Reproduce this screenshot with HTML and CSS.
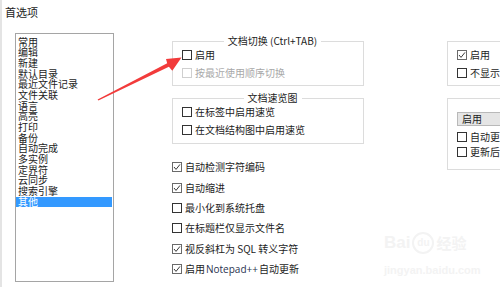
FILE: index.html
```html
<!DOCTYPE html>
<html lang="zh-CN">
<head>
    <meta charset="UTF-8">
    <title>首选项</title>
    <link rel="stylesheet" href="styles.css">
</head>
<body>
    <div class="title">首选项</div>

    <div class="main">
        <!-- category list -->
        <div class="list">
            <div class="item">常用</div>
            <div class="item">编辑</div>
            <div class="item">新建</div>
            <div class="item">默认目录</div>
            <div class="item">最近文件记录</div>
            <div class="item">文件关联</div>
            <div class="item">语言</div>
            <div class="item">高亮</div>
            <div class="item">打印</div>
            <div class="item">备份</div>
            <div class="item">自动完成</div>
            <div class="item">多实例</div>
            <div class="item">定界符</div>
            <div class="item">云同步</div>
            <div class="item">搜索引擎</div>
            <div class="item selected">其他</div>
        </div>

        <!-- middle column -->
        <div class="column middle">
            <fieldset class="group first">
                <legend>文档切换 (Ctrl+TAB)</legend>
                <div class="row"><span class="box"></span>启用</div>
                <div class="row disabled"><span class="box"></span>按最近使用顺序切换</div>
            </fieldset>
            <fieldset class="group second">
                <legend>文档速览图</legend>
                <div class="row"><span class="box"></span>在标签中启用速览</div>
                <div class="row"><span class="box"></span>在文档结构图中启用速览</div>
            </fieldset>

            <div class="checks">
                <div class="row"><span class="box checked"><svg viewBox="0 0 8 8"><polyline points="1,4 3,6.4 7,1.4"/></svg></span>自动检测字符编码</div>
                <div class="row"><span class="box checked"><svg viewBox="0 0 8 8"><polyline points="1,4 3,6.4 7,1.4"/></svg></span>自动缩进</div>
                <div class="row"><span class="box"></span>最小化到系统托盘</div>
                <div class="row"><span class="box"></span>在标题栏仅显示文件名</div>
                <div class="row"><span class="box checked"><svg viewBox="0 0 8 8"><polyline points="1,4 3,6.4 7,1.4"/></svg></span>视反斜杠为 SQL 转义字符</div>
                <div class="row"><span class="box checked"><svg viewBox="0 0 8 8"><polyline points="1,4 3,6.4 7,1.4"/></svg></span>启用 <span class="latin">Notepad++</span> 自动更新</div>
            </div>
        </div>

        <!-- right column (cut off by the window) -->
        <div class="column right">
            <fieldset class="group doclist">
                <div class="row"><span class="box checked"><svg viewBox="0 0 8 8"><polyline points="1,4 3,6.4 7,1.4"/></svg></span>启用</div>
                <div class="row"><span class="box"></span>不显示扩展名列</div>
            </fieldset>
            <fieldset class="group autodetect">
                <div class="combo">启用</div>
                <div class="row small"><span class="box"></span>自动更新</div>
                <div class="row small"><span class="box"></span>更新后滚动到最后一行</div>
            </fieldset>
        </div>
    </div>

    <!-- red arrow drawn over the dialog -->
    <svg class="arrow" width="500" height="287" viewBox="0 0 500 287">
        <polygon points="97.6,99.4 167.2,63.3 166,59 181.5,57.6 172.3,70.8 168.9,66.8 98.4,100.6"/>
    </svg>

    <!-- faint watermark -->
    <div class="watermark">
        <div class="mark-top"><span>Bai</span><span class="paw">du</span><span>经验</span></div>
        <div class="mark-url">jingyan.baidu.com</div>
    </div>
</body>
</html>
```

FILE: styles.css
```css
body {
    margin: 0;
    width: 500px;
    height: 287px;
    box-sizing: border-box;
    overflow: hidden;
    position: relative;
    background: #fff;
    border-left: 2px solid #e4e4e4;
    color: #1c1c1c;
    font-family: "Noto Sans CJK SC", "Noto Sans", sans-serif;
    font-size: 10px;
    line-height: 12px;
}

.title {
    height: 33px;
    padding-left: 3px;
    font-size: 11px;
    line-height: 24px;
}

.main {
    display: flex;
    padding-left: 13px;
}

.list {
    flex: none;
    width: 99px;
    height: 249px;
    box-sizing: border-box;
    border: 1px solid #a5a5a5;
    padding-top: 2.7px;
}
.item {
    padding-left: 2px;
    line-height: 10.67px;
    height: 10.67px;
    white-space: nowrap;
}
.item.selected {
    margin-right: 1px;
    background: #3399ff;
    color: #fff;
}

.column {
    flex: none;
    width: 192px;
}
.middle {
    margin-left: 58px;
}
.right {
    margin-left: 83px;
    width: 200px;
}

.group {
    margin: 0;
    min-width: 0;
    border: 1px solid #dcdcdc;
    padding: 0 0 3px 9px;
}
.group legend {
    margin-left: auto;
    margin-right: auto;
    padding: 0 4px;
    line-height: 10px;
    font-size: 10px;
}
.group.first {
    margin-top: 3px;
}
.group.second {
    margin-top: 7px;
    padding-bottom: 4px;
}
.group.doclist {
    margin-top: 8px;
    padding-top: 4px;
}
.group.autodetect {
    margin-top: 12px;
    padding-top: 13px;
    padding-bottom: 10px;
}

.row {
    display: flex;
    align-items: center;
    height: 18px;
    white-space: nowrap;
}
.row.small {
    height: 15px;
}
.row.disabled {
    color: #a8a8a8;
}

.box {
    flex: none;
    width: 10px;
    height: 10px;
    box-sizing: border-box;
    border: 1px solid #333;
    background: #fff;
    margin-right: 3px;
    display: flex;
}
.box.checked {
    border-color: #6a6a6a;
}
.box svg {
    width: 8px;
    height: 8px;
    fill: none;
    stroke: #3a3a3a;
    stroke-width: 1;
}
.row.disabled .box {
    border-color: #cfcfcf;
}

.checks {
    margin-top: 13px;
}
.checks .row {
    height: 20.4px;
}
.latin {
    font-family: "Open Sans", "Liberation Sans", sans-serif;
    color: #2a3350;
    margin: 0 1px;
}

.combo {
    height: 14px;
    box-sizing: border-box;
    border: 1px solid #b9b9b9;
    background: #e5e5e5;
    padding-left: 4px;
    line-height: 12px;
    margin-bottom: 3px;
    white-space: nowrap;
}

.arrow {
    position: absolute;
    left: -2px;
    top: 0;
    pointer-events: none;
}
.arrow polygon {
    fill: #f23b3b;
}

.watermark {
    position: absolute;
    left: 382px;
    top: 232px;
    color: #f3f3f3;
    font-family: "Liberation Sans", sans-serif;
    pointer-events: none;
}
.mark-top {
    display: flex;
    align-items: center;
    font-size: 17px;
    font-weight: bold;
    line-height: 22px;
}
.mark-top .paw {
    width: 22px;
    height: 22px;
    border: 2px solid #f3f3f3;
    border-radius: 50%;
    box-sizing: border-box;
    font-size: 10px;
    line-height: 18px;
    text-align: center;
    margin: 0 2px;
}
.mark-top span:last-child {
    font-family: "Noto Sans CJK SC", sans-serif;
    font-size: 15px;
}
.mark-url {
    font-size: 11px;
    font-weight: bold;
    margin-top: 10px;
}
```
